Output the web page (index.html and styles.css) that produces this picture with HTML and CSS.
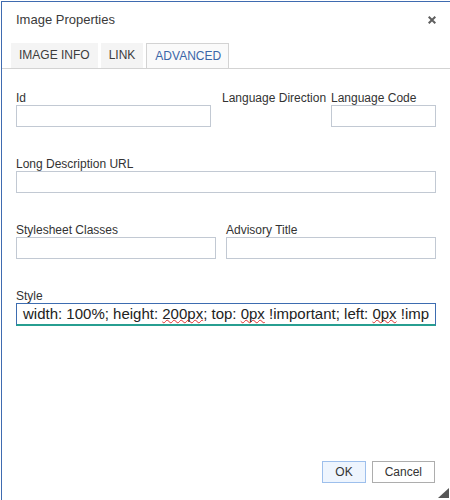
FILE: index.html
```html
<!DOCTYPE html>
<html>
<head>
<meta charset="utf-8">
<link rel="stylesheet" href="styles.css">
</head>
<body>
<div class="dialog">
  <div class="titlebar">
    <span class="title">Image Properties</span>
    <svg class="close" width="8" height="8" viewBox="0 0 8 8"><path d="M0.7 0.7 L7.3 7.3 M7.3 0.7 L0.7 7.3" stroke="#5f5f5f" stroke-width="2"/></svg>
  </div>
  <div class="tabs">
    <div class="tab">IMAGE INFO</div>
    <div class="tab">LINK</div>
    <div class="tab active">ADVANCED</div>
  </div>
  <div class="form">
    <div class="row">
      <div class="field f-id"><label class="lbl">Id</label><div class="input"></div></div>
      <div class="field f-dir"><label class="lbl">Language Direction</label></div>
      <div class="field f-code"><label class="lbl">Language Code</label><div class="input"></div></div>
    </div>
    <div class="row">
      <div class="field f-full"><label class="lbl">Long Description URL</label><div class="input"></div></div>
    </div>
    <div class="row row-gap">
      <div class="field f-cls"><label class="lbl">Stylesheet Classes</label><div class="input"></div></div>
      <div class="field f-adv"><label class="lbl">Advisory Title</label><div class="input"></div></div>
    </div>
    <div class="row">
      <div class="field f-full"><label class="lbl">Style</label><div class="input focused">width: 100%; height: <span class="sp">200px</span>; top: <span class="sp">0px</span> !important; left: <span class="sp">0px</span> !imp</div></div>
    </div>
  </div>
  <div class="footer">
    <button class="btn ok">OK</button>
    <button class="btn">Cancel</button>
  </div>
  <svg class="grip" width="11" height="10" viewBox="0 0 11 10"><polygon points="0,10 11,10 11,0" fill="#555"/></svg>
</div>
</body>
</html>
```

FILE: styles.css
```css
html, body {
  margin: 0;
  padding: 0;
  background: #fff;
}
body {
  font-family: "Liberation Sans", Arial, sans-serif;
  color: #333;
}
.dialog {
  position: relative;
  margin: 1px 0 0 1px;
  width: 449px;
  height: 499px;
  box-sizing: border-box;
  border-top: 1px solid #3f6bb0;
  border-left: 1px solid #3f6bb0;
  background: #fff;
  display: flex;
  flex-direction: column;
}
.titlebar {
  height: 41px;
  box-sizing: border-box;
  padding: 10px 14px 0 14px;
  display: flex;
  justify-content: space-between;
  align-items: flex-start;
}
.title {
  font-size: 13px;
  line-height: 16px;
  color: #3a3a3a;
}
.close {
  margin-top: 4px;
  display: block;
}
.tabs {
  display: flex;
  gap: 3px;
  padding-left: 9px;
  border-bottom: 1px solid #d3d3d3;
}
.tab {
  height: 25px;
  line-height: 25px;
  box-sizing: border-box;
  padding: 0 8px;
  font-size: 12px;
  background: #f4f4f4;
  color: #3c3c3c;
}
.tab.active {
  background: #fafafa;
  border: 1px solid #d3d3d3;
  border-bottom: none;
  line-height: 24px;
  padding: 0 7px 0 8px;
  color: #3a66a8;
}
.form {
  padding: 22px 14px 0 14px;
  display: flex;
  flex-direction: column;
  gap: 30px;
}
.row {
  display: flex;
  min-width: 0;
}
.row-gap {
  gap: 10px;
}
.field {
  display: flex;
  flex-direction: column;
  min-width: 0;
}
.lbl {
  font-size: 12px;
  line-height: 14px;
  white-space: nowrap;
  color: #333;
}
.input {
  height: 22px;
  box-sizing: border-box;
  border: 1px solid #c2c9d3;
  background: #fff;
}
.f-id { width: 195px; margin-right: 11px; }
.f-dir { flex: 1; }
.f-code { width: 105px; }
.f-full { flex: 1; }
.f-cls { width: 200px; }
.f-adv { flex: 1; }
.input.focused {
  height: 23px;
  border: 1px solid #3d6cb0;
  border-bottom: 2px solid #279e91;
  padding: 1px 4px 0 6px;
  font-size: 15px;
  line-height: 18px;
  color: #222;
  white-space: nowrap;
  overflow: hidden;
}
.sp {
  text-decoration: underline wavy #e03030;
  text-decoration-thickness: 1px;
  text-underline-offset: 0;
  text-decoration-skip-ink: none;
}
.footer {
  margin-top: auto;
  display: flex;
  justify-content: flex-end;
  gap: 6px;
  padding: 0 15px 17px 0;
}
.btn {
  height: 22px;
  box-sizing: border-box;
  padding: 0 12px;
  font-family: "Liberation Sans", Arial, sans-serif;
  font-size: 12px;
  color: #333;
  background: #fff;
  border: 1px solid #adadad;
  border-radius: 0;
  margin: 0;
}
.btn.ok {
  background: #eef5fe;
  border-color: #9dbfec;
}
.grip {
  position: absolute;
  right: 1px;
  bottom: 2px;
  display: block;
}
```
